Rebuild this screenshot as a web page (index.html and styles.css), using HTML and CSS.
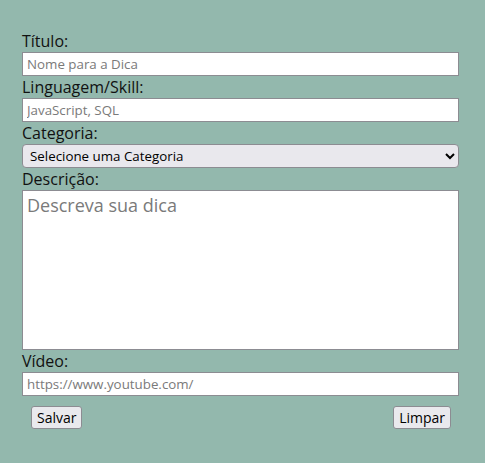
FILE: index.html
```html
<!DOCTYPE html>
<html lang="pt-BR">
<head>
<meta charset="utf-8">
<link rel="stylesheet" href="styles.css">
</head>
<body>
<form class="form">
  <label class="label" for="titulo">Título:</label>
  <input class="field" id="titulo" type="text" placeholder="Nome para a Dica">
  <label class="label" for="skill">Linguagem/Skill:</label>
  <input class="field" id="skill" type="text" placeholder="JavaScript, SQL">
  <label class="label" for="cat">Categoria:</label>
  <select class="select" id="cat">
    <option>Selecione uma Categoria</option>
  </select>
  <label class="label" for="desc">Descrição:</label>
  <textarea class="area" id="desc" placeholder="Descreva sua dica"></textarea>
  <label class="label" for="video">Vídeo:</label>
  <input class="field" id="video" type="text" placeholder="https://www.youtube.com/">
  <div class="actions">
    <button class="btn" type="button">Salvar</button>
    <button class="btn" type="reset">Limpar</button>
  </div>
</form>
</body>
</html>
```
FILE: styles.css
```css
html, body {
  margin: 0;
  padding: 0;
  background: #93b8ad;
  height: 100%;
}
body {
  font-family: "Open Sans", sans-serif;
  color: #111;
}
.form {
  display: flex;
  flex-direction: column;
  width: 437px;
  padding: 30px 0 0 22px;
}
.label {
  font-size: 16px;
  line-height: 22px;
  height: 22px;
}
.field, .area, .select {
  box-sizing: border-box;
  width: 437px;
  margin: 0;
  font-family: "Open Sans", sans-serif;
  border: 1px solid #8c8c92;
  background: #fff;
  color: #111;
}
.field {
  height: 24px;
  font-size: 13.333px;
  padding: 2px 4px;
}
.field::placeholder, .area::placeholder {
  color: #7a7a7a;
}
.select {
  height: 24px;
  font-size: 13.333px;
  padding: 0 3px;
  border-radius: 4px;
  background: #e9e8ed;
  color: #000;
}
.area {
  height: 160px;
  font-size: 18px;
  padding: 2px 4px;
  resize: none;
}
.actions {
  display: flex;
  justify-content: space-between;
  padding: 10px 8px 0 9px;
}
.btn {
  font-family: "Open Sans", sans-serif;
  font-size: 14px;
  height: 23px;
  padding: 0 5px;
  border: 1px solid #8c8c92;
  border-radius: 3px;
  background: #e9e9ed;
  color: #000;
  line-height: 20px;
}
```
